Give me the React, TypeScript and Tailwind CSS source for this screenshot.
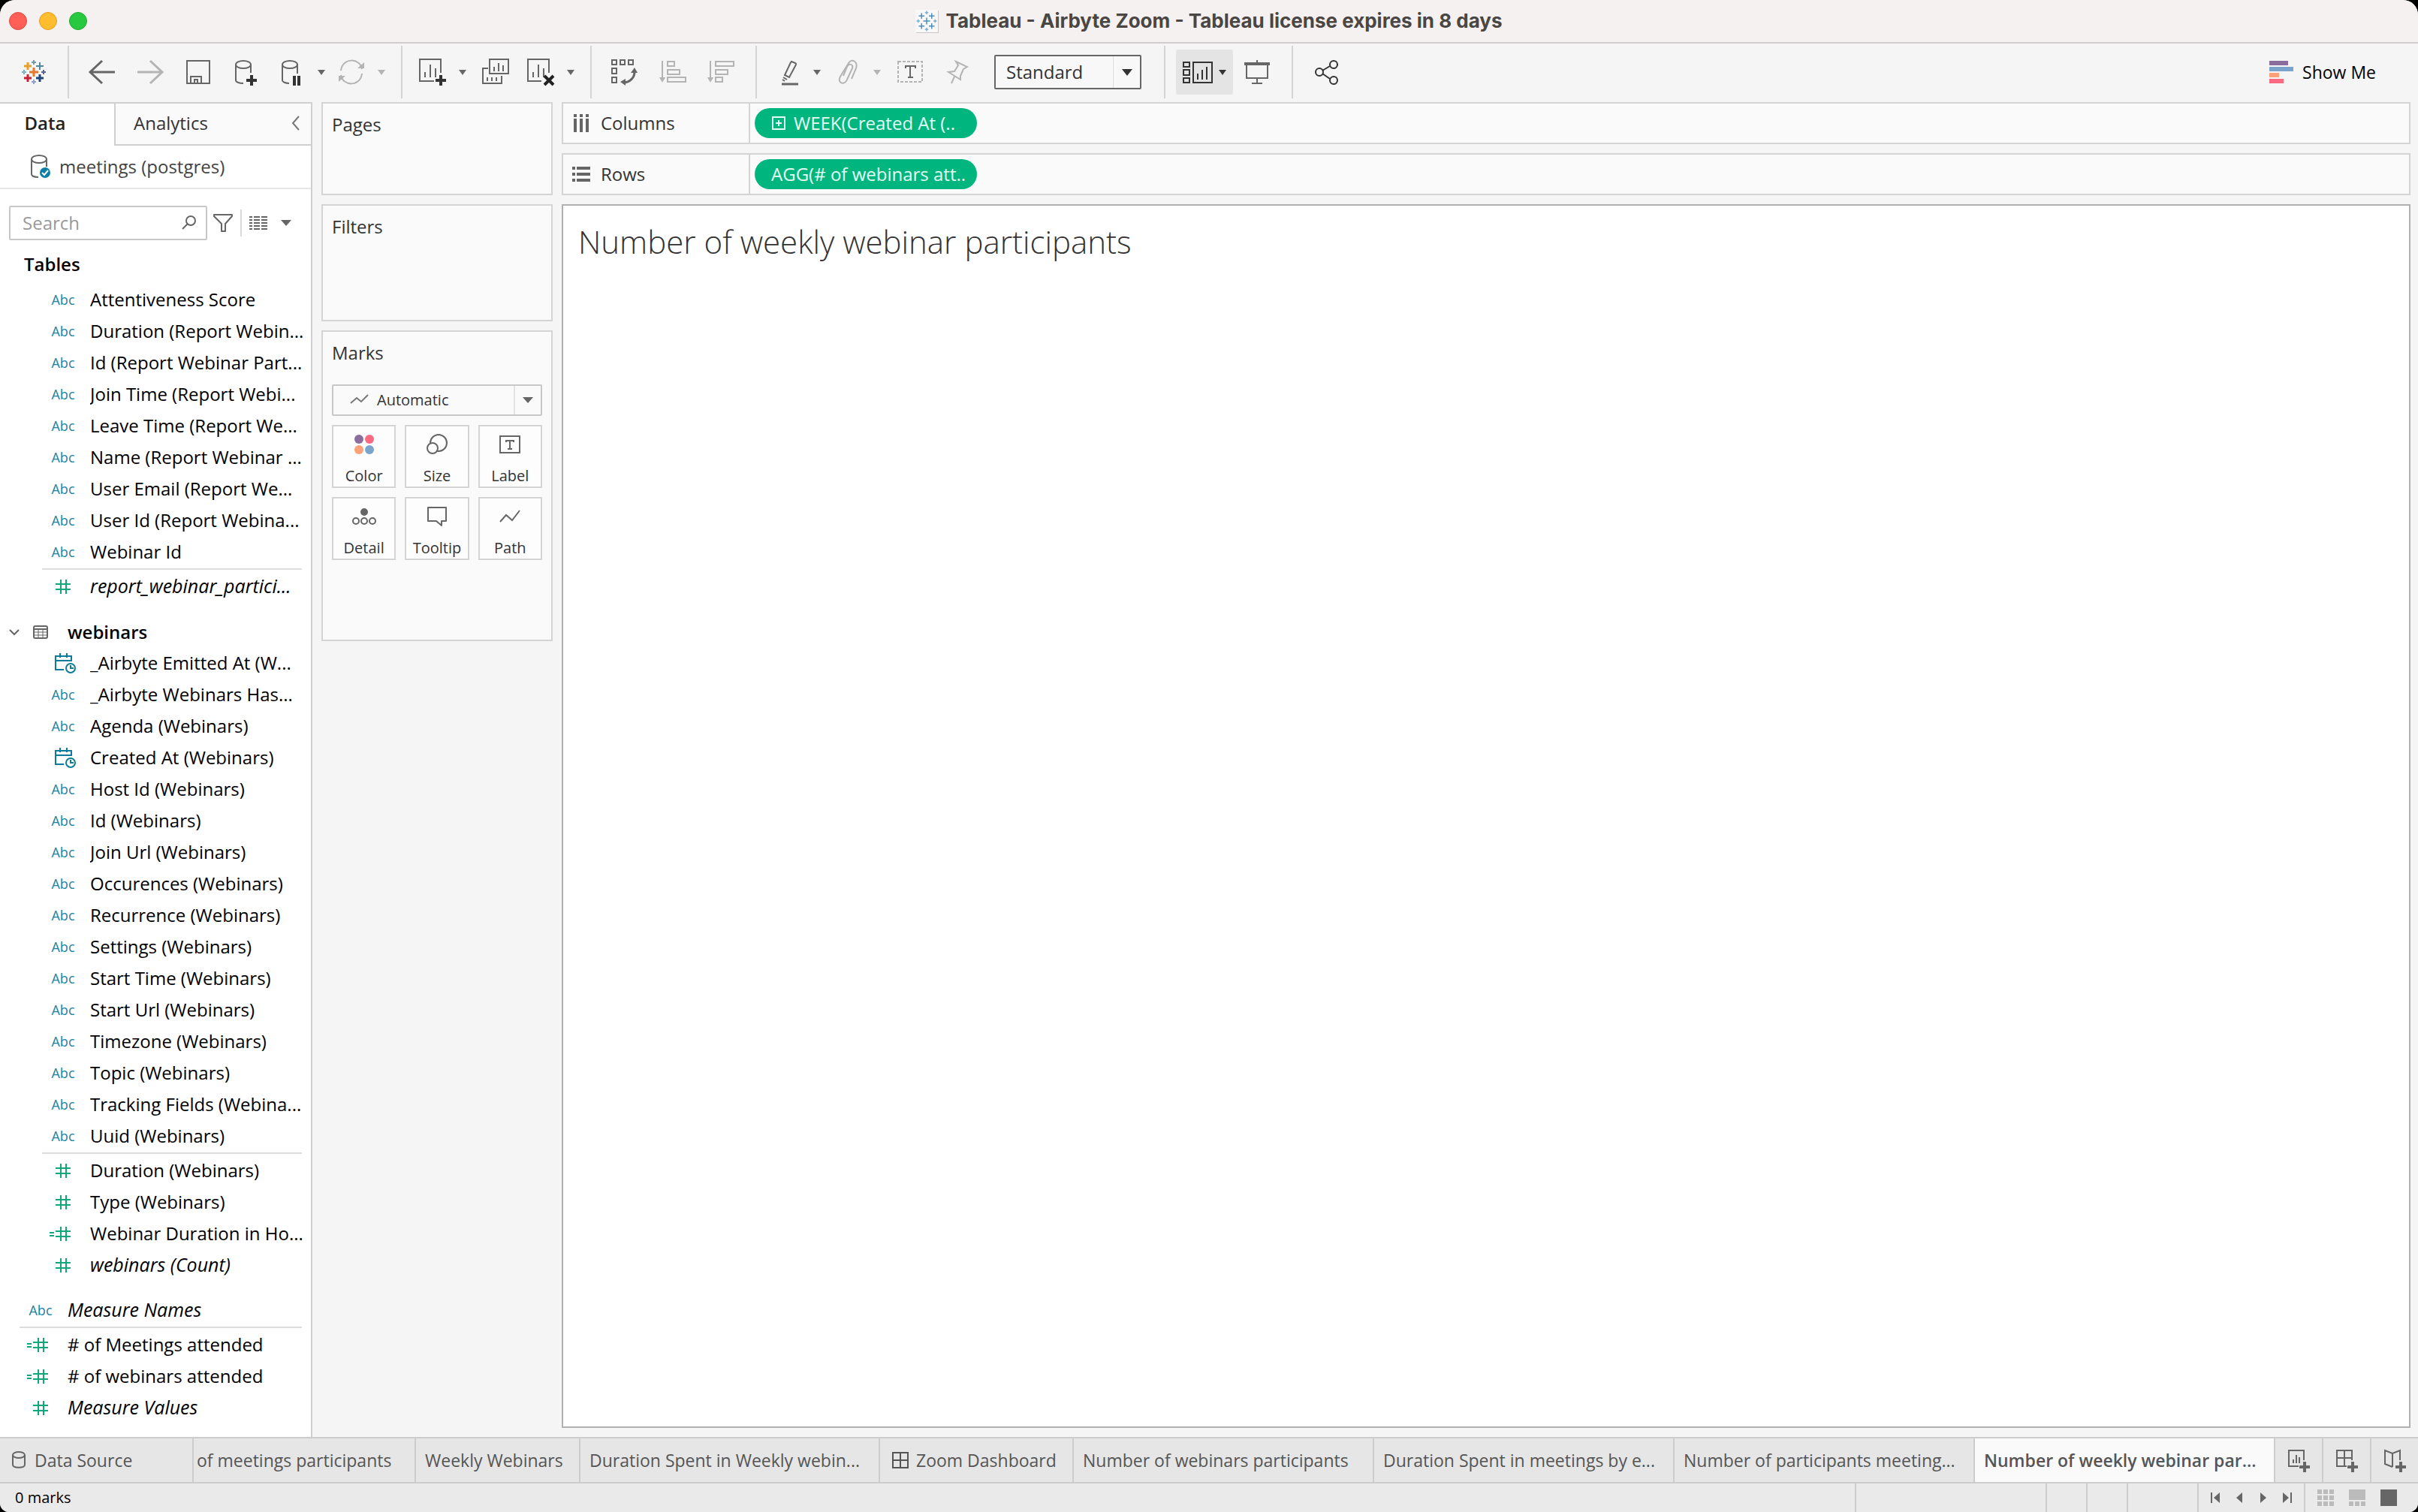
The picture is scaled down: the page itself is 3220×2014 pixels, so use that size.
import React, { useState } from 'react';
import clsx from 'clsx';

type FieldKind = 'text' | 'date' | 'number' | 'calc';

interface Field {
  name: string;
  kind: FieldKind;
  italic?: boolean;
}

interface SheetTab {
  label: string;
  width: string;
  icon?: 'dashboard';
}

const participantDimensions: Field[] = [
  { name: 'Attentiveness Score', kind: 'text' },
  { name: 'Duration (Report Webin...', kind: 'text' },
  { name: 'Id (Report Webinar Part...', kind: 'text' },
  { name: 'Join Time (Report Webi...', kind: 'text' },
  { name: 'Leave Time (Report We...', kind: 'text' },
  { name: 'Name (Report Webinar ...', kind: 'text' },
  { name: 'User Email (Report We...', kind: 'text' },
  { name: 'User Id (Report Webina...', kind: 'text' },
  { name: 'Webinar Id', kind: 'text' }
];

const participantMeasures: Field[] = [
  { name: 'report_webinar_partici...', kind: 'number', italic: true }
];

const webinarDimensions: Field[] = [
  { name: '_Airbyte Emitted At (W...', kind: 'date' },
  { name: '_Airbyte Webinars Has...', kind: 'text' },
  { name: 'Agenda (Webinars)', kind: 'text' },
  { name: 'Created At (Webinars)', kind: 'date' },
  { name: 'Host Id (Webinars)', kind: 'text' },
  { name: 'Id (Webinars)', kind: 'text' },
  { name: 'Join Url (Webinars)', kind: 'text' },
  { name: 'Occurences (Webinars)', kind: 'text' },
  { name: 'Recurrence (Webinars)', kind: 'text' },
  { name: 'Settings (Webinars)', kind: 'text' },
  { name: 'Start Time (Webinars)', kind: 'text' },
  { name: 'Start Url (Webinars)', kind: 'text' },
  { name: 'Timezone (Webinars)', kind: 'text' },
  { name: 'Topic (Webinars)', kind: 'text' },
  { name: 'Tracking Fields (Webina...', kind: 'text' },
  { name: 'Uuid (Webinars)', kind: 'text' }
];

const webinarMeasures: Field[] = [
  { name: 'Duration (Webinars)', kind: 'number' },
  { name: 'Type (Webinars)', kind: 'number' },
  { name: 'Webinar Duration in Ho...', kind: 'calc' },
  { name: 'webinars (Count)', kind: 'number', italic: true }
];

const globalMeasures: Field[] = [
  { name: '# of Meetings attended', kind: 'calc' },
  { name: '# of webinars attended', kind: 'calc' },
  { name: 'Measure Values', kind: 'number', italic: true }
];

const sheetTabs: SheetTab[] = [
  { label: 'of meetings participants', width: 'w-[296px] pl-1' },
  { label: 'Weekly Webinars', width: 'w-[219px] pl-3' },
  { label: 'Duration Spent in Weekly webin...', width: 'w-[399px] pl-3' },
  { label: 'Zoom Dashboard', width: 'w-[258px] pl-4', icon: 'dashboard' },
  { label: 'Number of webinars participants', width: 'w-[400px] pl-3' },
  { label: 'Duration Spent in meetings by e...', width: 'w-[400px] pl-3' },
  { label: 'Number of participants meeting...', width: 'w-[400px] pl-3' },
  { label: 'Number of weekly webinar par...', width: 'w-[400px] pl-3' }
];

function Caret({ className }: { className?: string }) {
  return (
    <svg width="10" height="7" viewBox="0 0 10 7" fill="currentColor" className={className}>
      <path d="M0 0h10L5 7z" />
    </svg>
  );
}

function Icon({ children, className }: { children: React.ReactNode; className?: string }) {
  return (
    <svg
      width="40"
      height="40"
      viewBox="0 0 40 40"
      fill="none"
      stroke="currentColor"
      strokeWidth="2"
      className={className}
    >
      {children}
    </svg>
  );
}

interface ToolProps {
  label: string;
  children: React.ReactNode;
  menu?: boolean;
  disabled?: boolean;
}

function Tool({ label, children, menu, disabled }: ToolProps) {
  const color = disabled ? 'text-[#b4b4b4]' : 'text-[#666666]';
  return (
    <>
      <button
        aria-label={label}
        disabled={disabled}
        className={clsx('flex h-[60px] items-center justify-center', menu ? 'w-14' : 'w-16', color)}
      >
        <Icon>{children}</Icon>
      </button>
      {menu && (
        <button
          aria-label={`${label} options`}
          disabled={disabled}
          className={clsx('flex h-[60px] w-6 items-center justify-center', color)}
        >
          <Caret />
        </button>
      )}
    </>
  );
}

function ToolGroup({ children }: { children: React.ReactNode }) {
  return (
    <div className="flex h-[70px] items-center border-l-2 border-[#d4d4d4] pr-3.5 pl-3">{children}</div>
  );
}

function Plus({ x, y, r, color, w = 2 }: { x: number; y: number; r: number; color: string; w?: number }) {
  return <path d={`M${x - r} ${y}h${r * 2}M${x} ${y - r}v${r * 2}`} stroke={color} strokeWidth={w} />;
}

function TableauLogo() {
  return (
    <Icon>
      <Plus x={20} y={20} r={6} color="#e8762d" w={3} />
      <Plus x={12} y={12} r={5} color="#e8a02d" w={3} />
      <Plus x={28} y={12} r={5} color="#4e8ba1" />
      <Plus x={12} y={28} r={5} color="#c72037" w={3} />
      <Plus x={28} y={28} r={5} color="#1f457e" w={3} />
      <Plus x={20} y={7} r={3} color="#7199a6" />
      <Plus x={20} y={33} r={3} color="#8ea3cb" />
      <Plus x={7} y={20} r={3} color="#7fb4cf" />
      <Plus x={33} y={20} r={3} color="#5b6591" />
    </Icon>
  );
}

function TitleBar() {
  return (
    <header className="flex h-[58px] items-center border-b-2 border-[#d2cdcd] bg-[#f4f1f0] px-3">
      <div className="flex flex-1 gap-4">
        <button aria-label="Close" className="size-6 rounded-full border border-[#e2463f] bg-[#fe5f57]" />
        <button aria-label="Minimize" className="size-6 rounded-full border border-[#e0a023] bg-[#febc2e]" />
        <button aria-label="Zoom" className="size-6 rounded-full border border-[#1eab2f] bg-[#28c840]" />
      </div>
      <div className="flex items-center gap-2.5">
        <svg width="30" height="30" viewBox="0 0 40 40" className="bg-[#f8f8f8] shadow-[1px_1px_0_#c8c8c8]">
          <Plus x={20} y={20} r={6} color="#4a90bd" />
          <Plus x={11} y={11} r={5} color="#4a90bd" />
          <Plus x={29} y={11} r={5} color="#4a90bd" />
          <Plus x={11} y={29} r={5} color="#4a90bd" />
          <Plus x={29} y={29} r={5} color="#4a90bd" />
          <Plus x={20} y={5} r={3} color="#7db0d0" />
          <Plus x={20} y={35} r={3} color="#7db0d0" />
          <Plus x={5} y={20} r={3} color="#7db0d0" />
          <Plus x={35} y={20} r={3} color="#7db0d0" />
        </svg>
        <h1 className="font-['Inter',sans-serif] text-[26px] leading-8 font-bold text-[#4a4644]">
          Tableau - Airbyte Zoom - Tableau license expires in 8 days
        </h1>
      </div>
      <div className="flex-1" />
    </header>
  );
}

function Toolbar() {
  return (
    <div className="flex h-[78px] items-center bg-[#f5f5f5] pb-0.5">
      <button aria-label="Start page" className="flex w-[90px] items-center justify-center">
        <TableauLogo />
      </button>

      <ToolGroup>
        <Tool label="Undo">
          <path d="M37 20H5M20 5L4 20l16 15" strokeWidth="3" />
        </Tool>
        <Tool label="Redo" disabled>
          <path d="M3 20h32M20 5l16 15-16 15" strokeWidth="3" />
        </Tool>
        <Tool label="Save">
          <path d="M5 5h30v30H5zM10 35v-9h14v9M15 35v-5h4v5" />
        </Tool>
        <Tool label="New data source">
          <ellipse cx="16" cy="10" rx="10" ry="5" />
          <path d="M6 10v21c0 2 4 4 10 4M26 10v11" />
          <path d="M20 31h14M27 24v14" stroke="#333333" strokeWidth="4" />
        </Tool>
        <Tool label="Pause auto updates" menu>
          <ellipse cx="18" cy="10" rx="10" ry="5" />
          <path d="M8 10v21c0 2 4 4 9 4M28 10v12" />
          <path d="M24 25v13M30 25v13" stroke="#333333" strokeWidth="4" />
        </Tool>
        <Tool label="Run update" menu disabled>
          <path d="M6 18C8 0 32 1 34 16M34 22C32 40 8 39 6 24" />
          <path d="M28 15h9v-8zM12 25H3v8z" fill="currentColor" stroke="none" />
        </Tool>
      </ToolGroup>

      <ToolGroup>
        <Tool label="New worksheet" menu>
          <path d="M22 32H3V3h28v18M10 27v-7M17 27V10M24 27V15" />
          <path d="M24 31h14M31 24v14" stroke="#333333" strokeWidth="4" />
        </Tool>
        <Tool label="Duplicate sheet">
          <path d="M12 3h25v19H12zM18 19v-6M24 19V8M30 19v-8M10 15H3v20h25v-10M9 32v-5M15 32v-5M21 32v-5" />
        </Tool>
        <Tool label="Clear sheet" menu>
          <path d="M21 32H3V3h28v18M10 27v-7M17 27V10M24 27V15" />
          <path d="M25 25l12 12M37 25L25 37" stroke="#222222" strokeWidth="4" />
        </Tool>
      </ToolGroup>

      <ToolGroup>
        <Tool label="Swap rows and columns">
          <path d="M3 4h6v6H3zM14 4h6v6h-6zM25 4h6v6h-6zM3 15h6v7H3zM3 27h6v7H3z" />
          <path d="M33 20c0 7-6 14-15 14" strokeWidth="3" />
          <path d="M28 21h9l-4-7zM21 29v9l-7-5z" fill="currentColor" stroke="none" />
        </Tool>
        <Tool label="Sort ascending" disabled>
          <path d="M6 5v24M13 6h9v6h-9zM13 17h16v6H13zM13 27h24v6H13z" />
          <path d="M2 27h8l-4 7z" fill="currentColor" stroke="none" />
        </Tool>
        <Tool label="Sort descending" disabled>
          <path d="M6 5v24M13 6h24v6H13zM13 17h16v6H13zM13 27h9v6h-9z" />
          <path d="M2 27h8l-4 7z" fill="currentColor" stroke="none" />
        </Tool>
      </ToolGroup>

      <ToolGroup>
        <Tool label="Highlight" menu>
          <path d="M26 6l5 2c1 0 1 1 1 2l-9 17-6-3 8-17zM15 27l5 3M14 30l3 2" />
          <path d="M13 36h22" strokeWidth="3" />
        </Tool>
        <Tool label="Group members" menu disabled>
          <path d="M26 29l6-14c3-9-6-14-10-7L11 26c-5 9 6 12 9 4l7-15c2-6-5-7-7-2l-5 12" />
        </Tool>
        <button
          aria-label="Annotate"
          className="flex h-[60px] w-16 items-center justify-center text-[#666666]"
        >
          <Icon>
            <path d="M4 6h32v27H4z" stroke="#b4b4b4" strokeDasharray="4 2" />
            <path d="M14 15v-3h13v3M20 12v15M17 27h7" />
          </Icon>
        </button>
        <Tool label="Fix axes" disabled>
          <path d="M17 6l15 7-5 3-4 9v5L7 20l8-1 5-8zM15 26l-4 9" />
        </Tool>
        <label className="relative mx-4 flex h-[46px] w-[196px] text-[#333333]">
          <select
            aria-label="Fit"
            className="w-full appearance-none rounded-xs border-2 border-[#666666] bg-[#f8f8f8] pl-3.5 text-2xl"
          >
            <option>Standard</option>
          </select>
          <span className="pointer-events-none absolute inset-y-0.5 right-0.5 flex w-9 items-center justify-center border-l border-[#dddddd]">
            <svg width="14" height="9" viewBox="0 0 14 9" fill="#333333">
              <path d="M0 0h14L7 9z" />
            </svg>
          </span>
        </label>
      </ToolGroup>

      <ToolGroup>
        <button
          aria-label="Show cards"
          className="ml-0.5 flex h-[60px] w-[76px] items-center justify-center gap-2 rounded-xs bg-[#e4e4e4] text-[#333333]"
        >
          <Icon>
            <path d="M1 7h8v6H1zM1 17h8v7H1zM1 28h8v6H1zM14 7h25v27H14zM20 30v-8M26 30V17M32 30V13" />
          </Icon>
          <Caret />
        </button>
        <Tool label="Presentation mode">
          <path d="M3 9h34" strokeWidth="4" />
          <path d="M6 10v18h28V10M20 4v4M20 28v7M13 35h14" />
        </Tool>
      </ToolGroup>

      <ToolGroup>
        <button aria-label="Share" className="flex h-[60px] w-16 items-center justify-center text-[#333333]">
          <Icon>
            <circle cx="11" cy="20" r="5" />
            <circle cx="30" cy="10" r="5" />
            <circle cx="30" cy="31" r="5" />
            <path d="M15 18l10-6M15 22l10 7" />
          </Icon>
        </button>
      </ToolGroup>

      <button className="mr-14 ml-auto flex items-center gap-3 text-[23px] text-black">
        <svg width="32" height="30" viewBox="0 0 32 30">
          <path d="M0 0h25v6H0z" fill="#8a6d9c" />
          <path d="M0 8h32v6H0z" fill="#7ba4cc" />
          <path d="M0 16h13v6H0z" fill="#ffa178" />
          <path d="M0 24h19v6H0z" fill="#fb6a80" />
        </svg>
        Show Me
      </button>
    </div>
  );
}

function FieldIcon({ kind }: { kind: FieldKind }) {
  switch (kind) {
    case 'date':
      return (
        <svg width="36" height="30" viewBox="0 0 36 30" fill="none" stroke="#0d7c9c" strokeWidth="2">
          <path d="M8 6h21v7M8 5v19h11M8 12h21M14 2v6M23 2v6" />
          <circle cx="28" cy="22" r="6" />
          <path d="M28 18v4h4" />
        </svg>
      );
    case 'number':
      return (
        <svg width="36" height="24" viewBox="0 0 36 24" fill="none" stroke="#0fa77b" strokeWidth="2">
          <path d="M8 9h20M8 16h20M15 3v19M22 3v19" />
        </svg>
      );
    case 'calc':
      return (
        <svg width="36" height="24" viewBox="0 0 36 24" fill="none" stroke="#0fa77b" strokeWidth="2">
          <path d="M8 9h20M8 16h20M15 3v19M22 3v19M0 11h6M0 15h6" />
        </svg>
      );
    default:
      return <span className="text-lg font-medium text-[#1c83a3]">Abc</span>;
  }
}

function FieldList({ fields }: { fields: Field[] }) {
  return (
    <ul>
      {fields.map((field) => (
        <li key={field.name} className="flex h-[42px] items-center gap-2">
          <span className="flex w-14 shrink-0 items-center justify-center">
            <FieldIcon kind={field.kind} />
          </span>
          <span className={clsx('truncate text-black', field.italic ? 'text-[25px] italic' : 'text-2xl')}>
            {field.name}
          </span>
        </li>
      ))}
    </ul>
  );
}

function Divider() {
  return <div className="my-px mr-3 h-0.5 bg-[#dddddd]" />;
}

function DataPane() {
  const [query, setQuery] = useState('');

  return (
    <aside className="flex w-[416px] shrink-0 flex-col border-r-2 border-[#d0d0d0] bg-white">
      <div className="flex h-[58px] border-t-2 border-[#d0d0d0]">
        <button className="w-[152px] bg-white pr-8 pb-1 text-2xl font-semibold text-[#222222]">Data</button>
        <div className="flex flex-1 items-center justify-between border-b-2 border-l-2 border-[#d0d0d0] bg-[#fafafa] pr-3.5 pb-0.5 pl-6">
          <button className="text-2xl text-[#333333]">Analytics</button>
          <button aria-label="Collapse pane" className="text-[#777777]">
            <svg width="12" height="20" viewBox="0 0 12 20" fill="none" stroke="currentColor" strokeWidth="2">
              <path d="M10 1L2 10l8 9" />
            </svg>
          </button>
        </div>
      </div>

      <div className="flex h-[58px] items-center gap-2 border-b-2 border-[#e6e6e6] pl-[39px] text-2xl text-[#444444]">
        <svg width="32" height="36" viewBox="0 0 32 36" fill="none" stroke="#666666" strokeWidth="2">
          <ellipse cx="13" cy="8" rx="10" ry="5" />
          <path d="M3 8v20c0 2 3 4 9 4M23 8v10" />
          <circle cx="21" cy="26" r="7" fill="#0d7fa5" stroke="none" />
          <path d="M17 26l3 3 5-6" stroke="#ffffff" />
        </svg>
        <span>meetings (postgres)</span>
      </div>

      <div className="mt-[22px] flex h-[46px] items-center pl-3 text-[#666666]">
        <label className="relative flex h-full w-[264px]">
          <input
            type="text"
            aria-label="Search fields"
            placeholder="Search"
            value={query}
            onChange={(e) => setQuery(e.target.value)}
            className="w-full rounded-xs border-2 border-[#c8c8c8] bg-white pl-4 text-2xl text-black placeholder:text-[#999999]"
          />
          <svg
            width="20"
            height="20"
            viewBox="0 0 20 20"
            fill="none"
            stroke="currentColor"
            strokeWidth="2"
            className="pointer-events-none absolute top-3 right-3.5"
          >
            <circle cx="12" cy="8" r="6" />
            <path d="M8 12l-7 7" />
          </svg>
        </label>
        <button aria-label="Filter fields" className="ml-1.5">
          <svg width="30" height="28" viewBox="0 0 30 28" fill="none" stroke="currentColor" strokeWidth="2">
            <path d="M3 3h24v2l-9 10v10h-5V15L3 5z" strokeLinejoin="round" />
          </svg>
        </button>
        <div className="ml-2 h-9 w-0.5 bg-[#d8d8d8]" />
        <button aria-label="View options" className="ml-2.5 flex items-center gap-4.5">
          <svg width="24" height="20" viewBox="0 0 24 20" stroke="currentColor" strokeWidth="2">
            <path
              d="M0 2h4M6 2h8M16 2h8M0 6h4M6 6h8M16 6h8M0 10h4M6 10h8M16 10h8M0 14h4M6 14h8M16 14h8M0 18h4M6 18h8M16 18h8"
            />
          </svg>
          <svg width="14" height="8" viewBox="0 0 14 8" fill="currentColor">
            <path d="M0 0h14L7 8z" />
          </svg>
        </button>
      </div>

      <h2 className="mt-4 ml-8 h-[42px] text-2xl leading-8 font-semibold text-black">Tables</h2>

      <div className="pl-14">
        <FieldList fields={participantDimensions} />
        <Divider />
        <FieldList fields={participantMeasures} />
      </div>

      <button className="mt-4.5 flex h-[42px] items-center pt-0.5 pl-3 text-2xl font-semibold text-black">
        <svg width="14" height="10" viewBox="0 0 14 10" fill="none" stroke="#666666" strokeWidth="2">
          <path d="M1 2l6 6 6-6" />
        </svg>
        <svg
          width="20"
          height="18"
          viewBox="0 0 20 18"
          fill="none"
          stroke="#666666"
          strokeWidth="2"
          className="mr-6.5 ml-4.5"
        >
          <rect x="1" y="1" width="18" height="16" rx="2" />
          <path d="M1 5h18" />
          <path d="M1 9h18M1 13h18M7 5v12M13 5v12" strokeWidth="1" />
        </svg>
        webinars
      </button>
      <div className="pl-14">
        <FieldList fields={webinarDimensions} />
        <Divider />
        <FieldList fields={webinarMeasures} />
      </div>

      <div className="mt-4.5 pl-[26px]">
        <FieldList fields={[{ name: 'Measure Names', kind: 'text', italic: true }]} />
        <Divider />
        <FieldList fields={globalMeasures} />
      </div>
    </aside>
  );
}

function Card({ title, className, children }: { title: string; className: string; children?: React.ReactNode }) {
  return (
    <section className={clsx('border-2 border-[#d4d4d4] bg-[#fafafa] px-3 pt-2.5', className)}>
      <h2 className="text-2xl leading-9 text-[#333333]">{title}</h2>
      {children}
    </section>
  );
}

function MarkButton({ label, children }: { label: string; children: React.ReactNode }) {
  return (
    <button className="flex h-[84px] flex-col items-center justify-between border-2 border-[#d4d4d4] bg-[#fdfdfd] pt-1 text-xl leading-7 text-[#333333]">
      <Icon className="text-[#666666]">{children}</Icon>
      {label}
    </button>
  );
}

function CardColumn() {
  return (
    <div className="flex w-[308px] shrink-0 flex-col gap-3">
      <Card title="Pages" className="h-[124px]" />
      <Card title="Filters" className="h-[156px]" />
      <Card title="Marks" className="h-[414px]">
        <label className="relative mt-6 flex h-[42px] text-[#333333]">
          <svg
            width="26"
            height="16"
            viewBox="0 0 26 16"
            fill="none"
            stroke="#777777"
            strokeWidth="2"
            className="pointer-events-none absolute top-3 left-6"
          >
            <path d="M1 13l8-7 6 5 9-9" />
          </svg>
          <select
            aria-label="Mark type"
            className="w-full appearance-none rounded-xs border-2 border-[#c8c8c8] bg-transparent pl-[58px] text-xl"
          >
            <option>Automatic</option>
          </select>
          <span className="pointer-events-none absolute inset-y-0.5 right-0.5 flex w-9 items-center justify-center border-l-2 border-[#e2e2e2]">
            <svg width="14" height="8" viewBox="0 0 14 8" fill="#666666">
              <path d="M0 0h14L7 8z" />
            </svg>
          </span>
        </label>
        <div className="mt-3 grid grid-cols-3 gap-3">
          <MarkButton label="Color">
            <g stroke="none">
              <circle cx="13" cy="13" r="6" fill="#8a6d9c" />
              <circle cx="27" cy="13" r="6" fill="#fb6a80" />
              <circle cx="13" cy="27" r="6" fill="#ffa178" />
              <circle cx="27" cy="27" r="6" fill="#7ba4cc" />
            </g>
          </MarkButton>
          <MarkButton label="Size">
            <circle cx="22" cy="18" r="11" />
            <circle cx="14" cy="25" r="7" fill="#fdfdfd" />
          </MarkButton>
          <MarkButton label="Label">
            <path d="M7 9h26v22H7z" />
            <path d="M15 17v-2h10v2M20 15v11M17 26h6" />
          </MarkButton>
          <MarkButton label="Detail">
            <circle cx="20" cy="14" r="4" fill="currentColor" />
            <circle cx="9" cy="26" r="4" />
            <circle cx="20" cy="26" r="4" />
            <circle cx="31" cy="26" r="4" />
          </MarkButton>
          <MarkButton label="Tooltip">
            <path d="M8 8h24v18h-6v6l-7-6H8z" strokeLinejoin="round" />
          </MarkButton>
          <MarkButton label="Path">
            <path d="M7 27l8-9 8 7 10-13" />
          </MarkButton>
        </div>
      </Card>
    </div>
  );
}

function Shelf({ label, icon, children }: { label: string; icon: React.ReactNode; children: React.ReactNode }) {
  return (
    <div className="flex h-14 border-2 border-[#d4d4d4] bg-[#fafafa]">
      <div className="flex w-[249px] shrink-0 items-center gap-3.5 border-r-2 border-[#d4d4d4] pl-3 text-2xl text-[#333333]">
        <svg width="24" height="24" viewBox="0 0 24 24" fill="#666666">
          {icon}
        </svg>
        {label}
      </div>
      <div className="flex flex-1 items-center pl-1.5">{children}</div>
    </div>
  );
}

function Pill({ label, expandable }: { label: string; expandable?: boolean }) {
  return (
    <button className="flex h-10 w-[296px] items-center gap-2.5 rounded-full bg-[#00b57e] pl-5.5 text-2xl whitespace-nowrap text-[#e6fff6]">
      {expandable && (
        <svg width="20" height="20" viewBox="0 0 20 20" fill="none" stroke="currentColor" strokeWidth="2">
          <path d="M2 2h16v16H2zM6 10h8M10 6v8" />
        </svg>
      )}
      {label}
    </button>
  );
}

function Worksheet() {
  return (
    <main className="flex min-w-0 flex-1 flex-col gap-3">
      <Shelf
        label="Columns"
        icon={<path d="M2 0h4v4H2zM10 0h4v4h-4zM18 0h4v4h-4zM2 6h4v18H2zM10 6h4v18h-4zM18 6h4v18h-4z" />}
      >
        <Pill label="WEEK(Created At (.." expandable />
      </Shelf>
      <Shelf
        label="Rows"
        icon={<path d="M0 2h4v4H0zM0 10h4v4H0zM0 18h4v4H0zM6 2h18v4H6zM6 10h18v4H6zM6 18h18v4H6z" />}
      >
        <Pill label="AGG(# of webinars att.." />
      </Shelf>
      <section className="flex-1 border-2 border-[#b0b0b0] bg-white px-5 py-4.5">
        <h2 className="text-[42px] leading-[60px] font-light text-[#333333]">Number of weekly webinar participants</h2>
      </section>
    </main>
  );
}

function SheetTabs() {
  const [active, setActive] = useState(sheetTabs.length - 1);

  return (
    <nav className="flex h-[62px] border-y-2 border-[#cccccc] bg-[#e6e6e6] text-[23px] text-[#555555]">
      <button className="flex w-[256px] shrink-0 items-center gap-3 pl-4">
        <svg width="18" height="24" viewBox="0 0 18 24" fill="none" stroke="#666666" strokeWidth="2">
          <ellipse cx="9" cy="5" rx="8" ry="4" />
          <path d="M1 5v13c0 5 16 5 16 0V5" />
        </svg>
        Data Source
      </button>
      {sheetTabs.map((tab, index) => (
        <button
          key={tab.label}
          onClick={() => setActive(index)}
          className={clsx(
            'flex items-center gap-2.5 border-l-2 border-[#cccccc] whitespace-nowrap',
            tab.width,
            index === active && 'bg-[#fafafa] font-semibold'
          )}
        >
          {tab.icon === 'dashboard' && (
            <svg width="22" height="22" viewBox="0 0 22 22" fill="none" stroke="#555555" strokeWidth="2">
              <path d="M1 1h20v20H1zM11 1v20M1 11h20" />
            </svg>
          )}
          {tab.label}
        </button>
      ))}
      <button aria-label="New worksheet" className="flex flex-1 items-center justify-center border-l-2 border-[#cccccc] text-[#666666]">
        <Icon>
          <path d="M20 28H7V7h20v13M13 24v-5M17 24V13M21 24v-8" />
          <path d="M21 29h14M28 22v14" strokeWidth="4" />
        </Icon>
      </button>
      <button aria-label="New dashboard" className="flex flex-1 items-center justify-center border-l-2 border-[#cccccc] text-[#666666]">
        <Icon>
          <path d="M20 28H7V7h20v13M17 7v21M7 17h20" />
          <path d="M21 29h14M28 22v14" strokeWidth="4" />
        </Icon>
      </button>
      <button aria-label="New story" className="flex flex-1 items-center justify-center border-l-2 border-[#cccccc] text-[#666666]">
        <Icon>
          <path d="M17 29L7 25V7l10 4 10-4v13M17 11v18" />
          <path d="M21 29h14M28 22v14" strokeWidth="4" />
        </Icon>
      </button>
    </nav>
  );
}

function StatusBar() {
  return (
    <footer className="flex h-[38px] bg-[#eaeaea] text-[#666666]">
      <div className="flex flex-1 items-center pl-5 text-xl text-black">0 marks</div>
      <div className="w-[254px] border-l-2 border-[#cccccc]" />
      <div className="w-[54px] border-l-2 border-[#cccccc]" />
      <div className="w-[54px] border-l-2 border-[#cccccc]" />
      <div className="w-[94px] border-l-2 border-[#cccccc]" />
      <div className="flex w-[142px] items-center justify-center gap-5 border-l-2 border-[#cccccc]">
        <button aria-label="First sheet">
          <svg width="12" height="14" viewBox="0 0 12 14" fill="currentColor">
            <path d="M0 0h2v14H0zM12 0v14L4 7z" />
          </svg>
        </button>
        <button aria-label="Previous sheet">
          <svg width="12" height="14" viewBox="0 0 12 14" fill="currentColor">
            <path d="M10 0v14L2 7z" />
          </svg>
        </button>
        <button aria-label="Next sheet">
          <svg width="12" height="14" viewBox="0 0 12 14" fill="currentColor">
            <path d="M2 0v14l8-7z" />
          </svg>
        </button>
        <button aria-label="Last sheet">
          <svg width="12" height="14" viewBox="0 0 12 14" fill="currentColor">
            <path d="M10 0h2v14h-2zM0 0v14l8-7z" />
          </svg>
        </button>
      </div>
      <div className="flex w-[152px] items-center gap-5 border-l-2 border-[#cccccc] pl-4">
        <button aria-label="Sheet sorter" className="text-[#bbbbbb]">
          <svg width="22" height="22" viewBox="0 0 22 22" fill="currentColor">
            <path d="M0 0h6v6H0zM8 0h6v6H8zM16 0h6v6h-6zM0 8h6v6H0zM8 8h6v6H8zM16 8h6v6h-6zM0 16h6v6H0zM8 16h6v6H8zM16 16h6v6h-6z" />
          </svg>
        </button>
        <button aria-label="Filmstrip" className="text-[#bbbbbb]">
          <svg width="22" height="22" viewBox="0 0 22 22" fill="currentColor">
            <path d="M0 0h22v14H0zM0 16h6v6H0zM8 16h6v6H8zM16 16h6v6h-6z" />
          </svg>
        </button>
        <button aria-label="Tabs view">
          <svg width="22" height="22" viewBox="0 0 22 22" fill="currentColor">
            <path d="M0 0h22v22H0z" />
          </svg>
        </button>
      </div>
    </footer>
  );
}

export default function App() {
  return (
    <div className="bg-black font-['Open_Sans','Noto_Sans',sans-serif]">
      <div className="flex min-h-screen flex-col overflow-hidden rounded-t-[20px] rounded-b-[12px] bg-[#f5f5f5]">
        <TitleBar />
        <Toolbar />
        <div className="flex flex-1">
          <DataPane />
          <div className="flex min-w-0 flex-1 gap-3 pr-2.5 pb-3 pl-3">
            <CardColumn />
            <Worksheet />
          </div>
        </div>
        <SheetTabs />
        <StatusBar />
      </div>
    </div>
  );
}
